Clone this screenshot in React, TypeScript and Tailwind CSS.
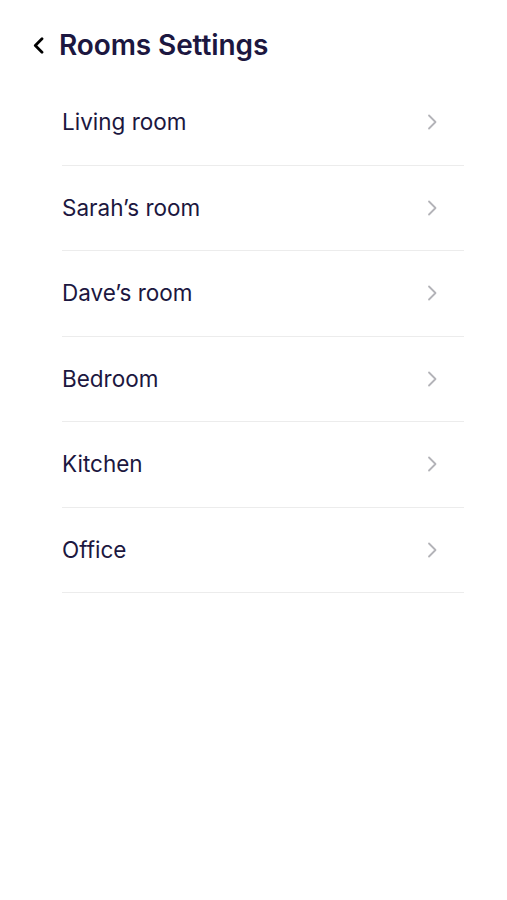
const ROOMS = ["Living room", "Sarah’s room", "Dave’s room", "Bedroom", "Kitchen", "Office"];

const ChevronRight = () => (
  <svg width="11" height="16" viewBox="0 0 11 16" fill="none" className="shrink-0">
    <path d="M2 1.5L8.5 8L2 14.5" stroke="#b3b3b8" strokeWidth="1.8" strokeLinecap="round" strokeLinejoin="round" />
  </svg>
);

export default function App() {
  return (
    <div className="min-h-[900px] w-full bg-white" style={{ fontFamily: "Inter, 'Liberation Sans', sans-serif" }}>
      <header className="flex items-center pl-[31px] pt-[29px]">
        <button className="flex h-[32px] w-[14px] items-center justify-center">
          <svg width="13" height="17" viewBox="0 0 13 17" fill="none">
            <path d="M10 1.8L3.3 8.5L10 15.2" stroke="#000" strokeWidth="2.8" strokeLinecap="round" strokeLinejoin="round" />
          </svg>
        </button>
        <h1 className="ml-[14px] text-[28px] leading-[32px] font-semibold tracking-[-0.1px] text-[#1c1740]">Rooms Settings</h1>
      </header>
      <ul className="ml-[62px] mr-[43px] mt-[19px]">
        {ROOMS.map((room) => (
          <li key={room} className="flex h-[85.5px] items-center justify-between border-b border-[#ececec] pr-[26px]">
            <span className="text-[22.5px] leading-[28px] text-[#1c1740]">{room}</span>
            <ChevronRight />
          </li>
        ))}
      </ul>
    </div>
  );
}
